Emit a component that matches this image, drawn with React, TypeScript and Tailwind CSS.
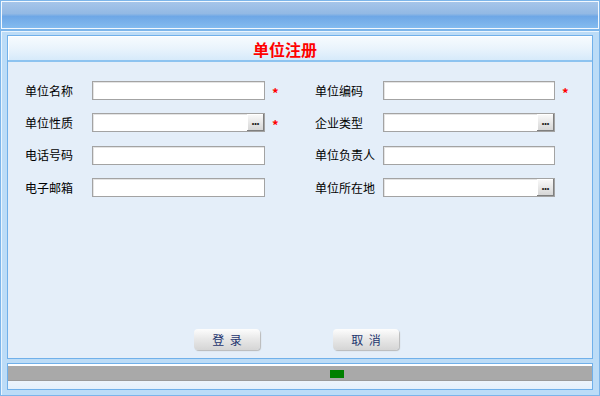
import { Fragment } from 'react'

const FONT = { fontFamily: '"Noto Sans CJK SC", "Noto Sans", sans-serif' }

interface Field {
  label: string
  picker?: boolean
  required?: boolean
}

const rows: [Field, Field][] = [
  [{ label: '单位名称', required: true }, { label: '单位编码', required: true }],
  [{ label: '单位性质', picker: true, required: true }, { label: '企业类型', picker: true }],
  [{ label: '电话号码' }, { label: '单位负责人' }],
  [{ label: '电子邮箱' }, { label: '单位所在地', picker: true }],
]

function Input({ picker, width }: { picker?: boolean; width: string }) {
  return (
    <div
      className={`relative h-[19px] ${width} border border-[#a3a3a3] bg-white shadow-[inset_1px_1px_0_#e4e4e4]`}
    >
      {picker && (
        <div className="absolute right-0 top-0 flex h-[17px] w-[17px] items-center justify-center border-r border-b border-[#7f7f7f] bg-[linear-gradient(to_bottom,#fbfbfb,#d6d6d6)] shadow-[inset_1px_1px_0_#fff]">
          <span className="text-[11px] font-bold leading-none text-[#222] tracking-[-1px] mb-[3px]">...</span>
        </div>
      )}
    </div>
  )
}

function Star({ show }: { show?: boolean }) {
  return (
    <div className="flex h-[19px] items-center pl-[7px]">
      {show && <span className="text-[13px] font-bold leading-none text-[#ff0000] mt-[4px]">*</span>}
    </div>
  )
}

function Label({ text }: { text: string }) {
  return <div className="flex h-[19px] items-center text-[12px] leading-none text-black">{text}</div>
}

function Btn({ text }: { text: string }) {
  return (
    <button className="flex h-[21px] w-[66px] items-center justify-center rounded-[4px] bg-[linear-gradient(to_bottom,#fdfdfd,#e9e9e9_45%,#d5d5d5)] shadow-[1px_1px_1px_#b9b9b9] text-[12px] leading-none text-[#1d346e]">
      {text}
    </button>
  )
}

export default function App() {
  return (
    <div className="flex h-[396px] w-[600px] flex-col bg-[#c3e1f8]" style={FONT}>
      {/* top bar */}
      <div className="h-[30px] border border-[#7cb5ea] shadow-[inset_1px_1px_0_#f2f8fe,inset_-1px_-1px_0_#f2f8fe] bg-[linear-gradient(to_bottom,#a7c6ea_0%,#93b9e4_45%,#6ea7e6_55%,#85bdf0_100%)]" />

      {/* main frame */}
      <div className="flex flex-1 flex-col gap-[4px] border border-[#7cb5ea] bg-[#bcdcf7] px-[6px] pt-[4px] pb-[5px] shadow-[inset_1px_1px_0_#eaf5fe]">
        <div className="flex flex-1 flex-col border border-[#70b0ea] bg-[#e4eef9]">
          <div className="h-[26px] border-b-2 border-[#8dc3f0] bg-[linear-gradient(to_bottom,#f7fbfe,#eaf4fc_50%,#d6eafa)] shadow-[inset_1px_1px_0_#fff] pl-[245px] pt-[1px]">
            <span className="text-[16px] font-bold leading-[22px] text-[#ff0000]">单位注册</span>
          </div>
          <div className="flex flex-1 flex-col pl-[17px] pt-[19px] pb-[8px]">
            <div className="grid grid-cols-[67px_173px_50px_68px_172px_30px] gap-y-[13.4px]">
              {rows.map(([a, b]) => (
                <Fragment key={a.label}>
                  <Label text={a.label} />
                  <Input picker={a.picker} width="w-[173px]" />
                  <Star show={a.required} />
                  <Label text={b.label} />
                  <Input picker={b.picker} width="w-[172px]" />
                  <Star show={b.required} />
                </Fragment>
              ))}
            </div>
            <div className="flex-1" />
            <div className="flex gap-[73px] pl-[169px]">
              <Btn text={'登\u00a0\u00a0录'} />
              <Btn text={'取\u00a0\u00a0消'} />
            </div>
          </div>
        </div>

        {/* status bar */}
        <div className="h-[27px] border border-[#70b0ea] bg-[linear-gradient(to_bottom,#ffffff,#e3f0fc)] pt-[2px]">
          <div className="flex h-[15px] items-center bg-[#a9a9a9] border-b border-[#9a9a9a] pl-[322px] pt-[2px]">
            <div className="h-[8px] w-[14px] bg-[#008000]" />
          </div>
        </div>
      </div>
    </div>
  )
}
